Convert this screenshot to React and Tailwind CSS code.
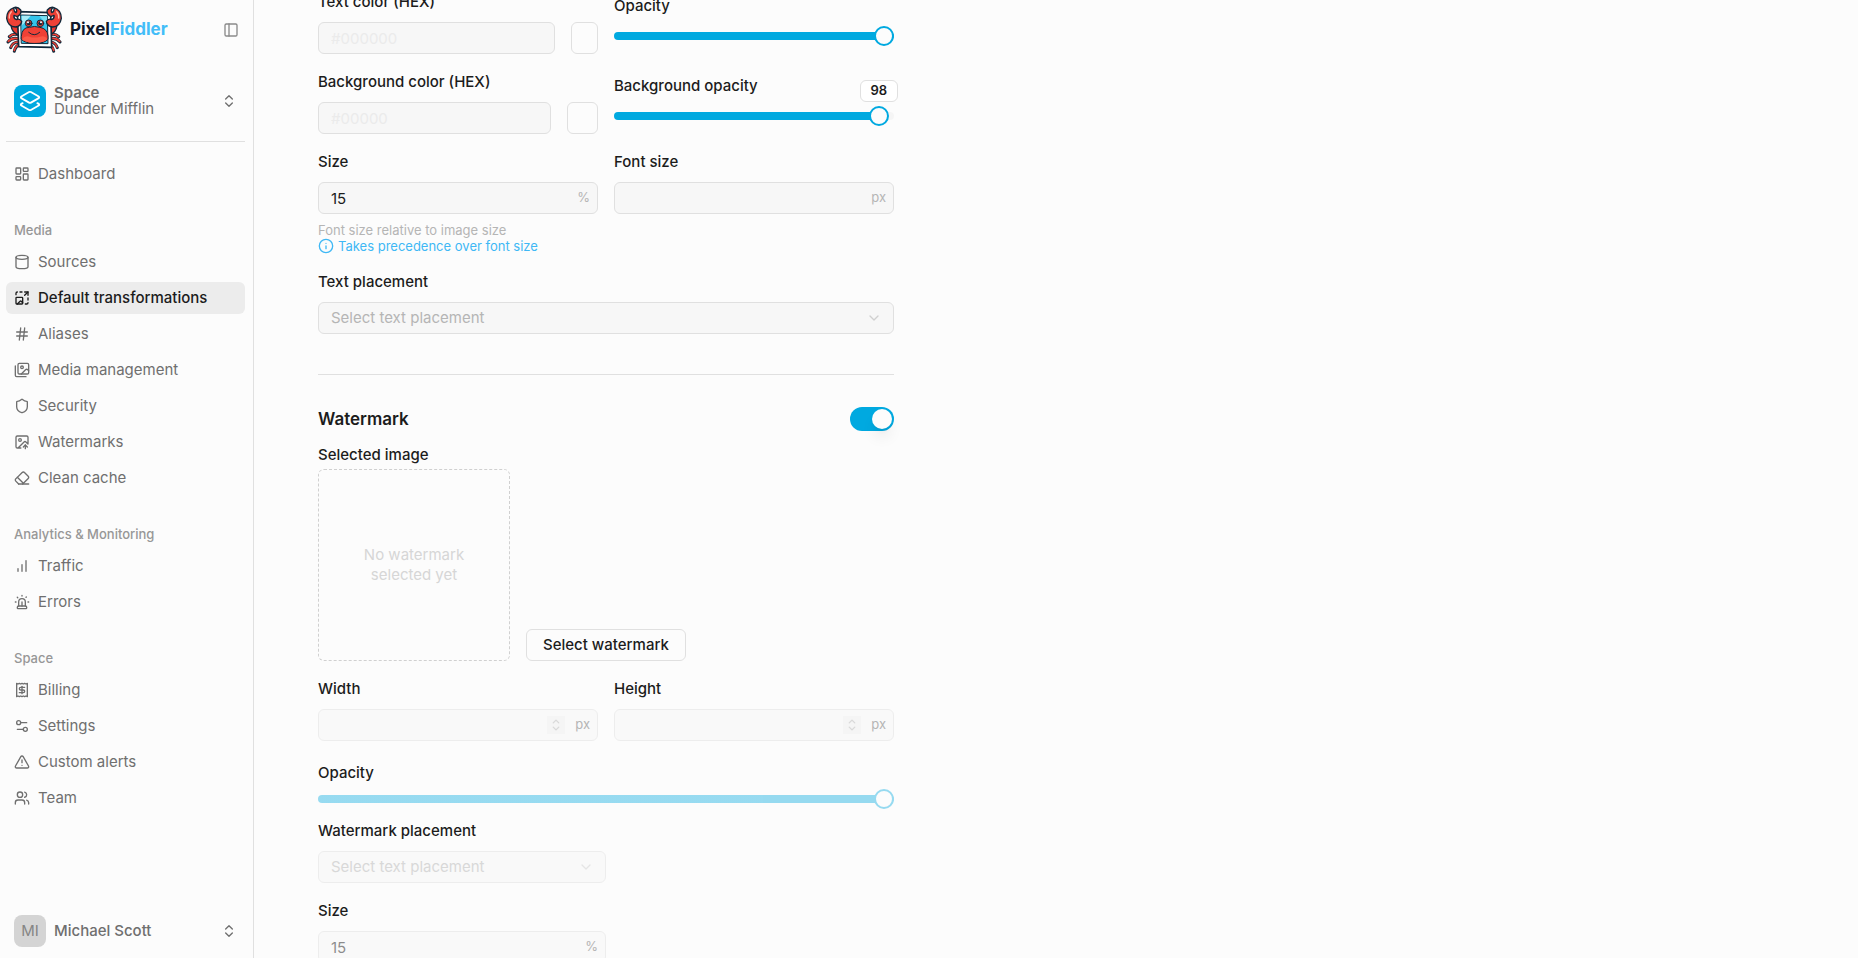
import { useState } from 'react';
import {
  ChevronDown,
  ChevronUp,
  ChevronsUpDown,
  Cylinder,
  Hash,
  ImageUp,
  ImageUpscale,
  Info,
  Layers2,
  LayoutDashboard,
  PanelLeft,
  Settings2,
  Shield,
  Siren,
  TriangleAlert,
  Users,
} from 'lucide-react';

function Glyph({ size = 16, children }) {
  return (
    <svg width={size} height={size} viewBox="0 0 24 24" fill="none" stroke="currentColor" strokeWidth="2" strokeLinecap="round" strokeLinejoin="round" className="shrink-0">
      {children}
    </svg>
  );
}

const ImagesIcon = ({ size }) => (
  <Glyph size={size}>
    <path d="M18 22H4a2 2 0 0 1-2-2V6" />
    <path d="m22 13-1.296-1.296a2.41 2.41 0 0 0-3.408 0L11 18" />
    <circle cx="12" cy="8" r="2" />
    <rect width="16" height="16" x="6" y="2" rx="2" />
  </Glyph>
);

const EraserIcon = ({ size }) => (
  <Glyph size={size}>
    <path d="m7 21-4.3-4.3c-1-1-1-2.5 0-3.4l9.6-9.6c1-1 2.5-1 3.4 0l5.6 5.6c1 1 1 2.5 0 3.4L13 21" />
    <path d="M22 21H7" />
    <path d="m5 11 9 9" />
  </Glyph>
);

const BarsIcon = ({ size }) => (
  <Glyph size={size}>
    <path d="M12 20V10" />
    <path d="M18 20V4" />
    <path d="M6 20v-4" />
  </Glyph>
);

const ReceiptIcon = ({ size }) => (
  <Glyph size={size}>
    <path d="M4 2v20l2-1 2 1 2-1 2 1 2-1 2 1 2-1 2 1V2l-2 1-2-1-2 1-2-1-2 1-2-1-2 1Z" />
    <path d="M16 8h-6a2 2 0 1 0 0 4h4a2 2 0 1 1 0 4H8" />
    <path d="M12 17.5v-11" />
  </Glyph>
);

const NAV = [
  { items: [{ label: 'Dashboard', icon: LayoutDashboard }] },
  {
    title: 'Media',
    items: [
      { label: 'Sources', icon: Cylinder },
      { label: 'Default transformations', icon: ImageUpscale, active: true },
      { label: 'Aliases', icon: Hash },
      { label: 'Media management', icon: ImagesIcon },
      { label: 'Security', icon: Shield },
      { label: 'Watermarks', icon: ImageUp },
      { label: 'Clean cache', icon: EraserIcon },
    ],
  },
  {
    title: 'Analytics & Monitoring',
    items: [
      { label: 'Traffic', icon: BarsIcon },
      { label: 'Errors', icon: Siren },
    ],
  },
  {
    title: 'Space',
    items: [
      { label: 'Billing', icon: ReceiptIcon },
      { label: 'Settings', icon: Settings2 },
      { label: 'Custom alerts', icon: TriangleAlert },
      { label: 'Team', icon: Users },
    ],
  },
];

function CrabLogo() {
  return (
    <svg viewBox="18 18 168 144" className="h-12 w-14 shrink-0" strokeLinejoin="round" strokeLinecap="round">
      {/* legs */}
      <g fill="none" stroke="#12283a" strokeWidth="9">
        <path d="M52 104Q38 100 28 110M54 116Q36 112 24 126M56 126Q38 126 32 143M60 132Q46 138 43 154" />
        <path d="M152 104Q166 100 176 110M152 116Q168 112 180 126M150 126Q166 126 172 143M146 132Q158 138 161 154" />
      </g>
      <g fill="none" stroke="#ef4136" strokeWidth="5">
        <path d="M52 104Q38 100 29 109M54 116Q36 112 25 124M56 126Q38 126 33 141M60 132Q46 138 43 151" />
        <path d="M152 104Q166 100 175 109M152 116Q168 112 179 124M150 126Q166 126 171 141M146 132Q158 138 161 151" />
      </g>
      {/* arms */}
      <path d="M33 76Q36 100 58 106L62 86Q50 84 48 76Z" fill="#e8382f" stroke="#12283a" strokeWidth="4" />
      <path d="M171 76Q168 100 146 106L142 86Q154 84 156 76Z" fill="#e8382f" stroke="#12283a" strokeWidth="4" />
      {/* frame */}
      <path d="M52 35L152 38L155 142L56 140Z" fill="#fff" stroke="#12283a" strokeWidth="5" />
      <path d="M63 45L142 47L144 131L65 130Z" fill="#35c4ea" stroke="#12283a" strokeWidth="3" />
      <path d="M65 47L92 47L67 76Z" fill="#a8ecf7" />
      <path d="M118 48L141 49L142 76Z" fill="#7adff2" />
      {/* body */}
      <path d="M64 108Q66 82 88 82Q103 77 120 82Q142 86 144 108L144 118Q134 130 104 130Q74 130 64 118Z" fill="#ef4136" stroke="#12283a" strokeWidth="3" />
      <path d="M66 118Q74 106 88 110Q104 115 120 110Q136 106 142 118Q132 129 104 128Q76 129 66 118Z" fill="#fb5a48" />
      <path d="M86 97Q103 112 119 97" fill="none" stroke="#12283a" strokeWidth="3" />
      {/* eyes */}
      <circle cx="86" cy="70" r="10" fill="#ef4136" stroke="#12283a" strokeWidth="3" />
      <circle cx="121" cy="70" r="10" fill="#ef4136" stroke="#12283a" strokeWidth="3" />
      <circle cx="86" cy="70" r="6" fill="#12283a" />
      <circle cx="121" cy="70" r="6" fill="#12283a" />
      <circle cx="84" cy="67" r="3" fill="#fff" />
      <circle cx="123" cy="67" r="3" fill="#fff" />
      {/* claws */}
      <path d="M42 23Q20 30 20 55Q24 80 46 81Q64 78 65 64Q58 54 50 59Q40 56 42 46L52 50Q66 42 62 30Q54 20 44 22Q54 30 48 38Q40 34 42 23Z" fill="#ef4136" stroke="#12283a" strokeWidth="4" />
      <path d="M162 23Q184 30 184 55Q180 80 158 81Q140 78 139 64Q146 54 154 59Q164 56 162 46L152 50Q138 42 142 30Q150 20 160 22Q150 30 156 38Q164 34 162 23Z" fill="#ef4136" stroke="#12283a" strokeWidth="4" />
      <path d="M28 54Q27 42 34 35" fill="none" stroke="#ffb3a3" strokeWidth="4" />
      <path d="M176 54Q177 42 170 35" fill="none" stroke="#ffb3a3" strokeWidth="4" />
    </svg>
  );
}

function NavGroup({ title, items }) {
  return (
    <div>
      {title && <h2 className="h-8 px-2 text-[13px] leading-8 font-medium text-[#979797]">{title}</h2>}
      <ul className="flex flex-col gap-1">
        {items.map(({ label, icon: Icon, active }) => (
          <li key={label}>
            <a
              href="#"
              className={`flex h-8 items-center gap-2 rounded-md px-2 ${
                active ? 'bg-[#ececec] font-medium text-[#1c1c1c]' : 'text-[#6f6f6f]'
              }`}
            >
              <Icon size={16} />
              {label}
            </a>
          </li>
        ))}
      </ul>
    </div>
  );
}

function Sidebar() {
  return (
    <aside className="flex w-[254px] shrink-0 flex-col border-r border-[#e0e0e0] pt-1.5 pr-2 pb-[3px] pl-1.5 text-[#6f6f6f]">
      <div className="flex items-center gap-2 pr-1.5">
        <CrabLogo />
        <span className="text-[17px] font-bold text-[#10182b]">
          Pixel<span className="text-[#42bdf8]">Fiddler</span>
        </span>
        <button type="button" aria-label="Toggle sidebar" className="ml-auto text-[#8a8a8a]">
          <PanelLeft size={16} />
        </button>
      </div>

      <button type="button" className="mt-[23px] flex h-12 items-center gap-2 px-2 text-left">
        <span className="flex size-8 items-center justify-center rounded-lg bg-[#00a9e0] text-white">
          <Layers2 size={22} strokeWidth={2} />
        </span>
        <span className="flex flex-1 flex-col leading-4">
          <span className="font-semibold">Space</span>
          <span>Dunder Mifflin</span>
        </span>
        <ChevronsUpDown size={16} />
      </button>

      <hr className="mt-4 border-[#e0e0e0]" />

      <nav className="mt-4 flex flex-col gap-6">
        {NAV.map((group, i) => (
          <NavGroup key={i} {...group} />
        ))}
      </nav>

      <button type="button" className="mt-auto flex h-12 items-center gap-2 px-2 text-left">
        <span className="flex size-8 items-center justify-center rounded-lg bg-[#d4d4d4] text-[#858585]">MI</span>
        <span className="flex-1 font-medium">Michael Scott</span>
        <ChevronsUpDown size={16} />
      </button>
    </aside>
  );
}

function Label({ htmlFor, children }) {
  return (
    <label htmlFor={htmlFor} className="block h-6 leading-6 font-medium text-[#1c1c1c]">
      {children}
    </label>
  );
}

function ColorField({ id, label, placeholder, swatch }) {
  return (
    <div className="flex flex-col gap-2">
      <Label htmlFor={id}>{label}</Label>
      <div className="flex gap-4">
        <input
          id={id}
          placeholder={placeholder}
          className="h-8 min-w-0 flex-1 rounded-md border border-[#e0e0e0] bg-[#f7f7f7] px-3 placeholder:text-[#ebebeb]"
        />
        <button type="button" aria-label={`Pick ${label}`} className={`h-8 shrink-0 rounded-md border border-[#e0e0e0] ${swatch}`} />
      </div>
    </div>
  );
}

function NumberField({ id, label, unit, defaultValue, disabled, stepper }) {
  return (
    <div className="flex flex-col gap-2">
      <Label htmlFor={id}>{label}</Label>
      <div className="relative">
        <input
          id={id}
          inputMode="numeric"
          defaultValue={defaultValue}
          disabled={disabled}
          className="h-8 w-full rounded-md border border-[#e0e0e0] bg-[#f7f7f7] pr-14 pl-3 text-[#1c1c1c] disabled:opacity-50"
        />
        <div className="pointer-events-none absolute inset-y-0 right-2 flex items-center gap-2.5 text-[13px] text-[#b5b5b5]">
          {stepper && (
            <span className="flex h-[18px] w-[18px] flex-col items-center justify-center bg-[#f5f5f5] text-[#d9d9d9]">
              <ChevronUp size={12} strokeWidth={3} className="-mb-1" />
              <ChevronDown size={12} strokeWidth={3} />
            </span>
          )}
          <span>{unit}</span>
        </div>
      </div>
    </div>
  );
}

function SelectField({ id, label, disabled }) {
  return (
    <div className="flex flex-col gap-2">
      <Label htmlFor={id}>{label}</Label>
      <div className={`relative ${disabled ? 'opacity-50' : ''}`}>
        <select
          id={id}
          disabled={disabled}
          className="h-8 w-full appearance-none rounded-md border border-[#e0e0e0] bg-[#f7f7f7] px-3 text-[#b5b5b5] opacity-100"
        >
          <option>Select text placement</option>
        </select>
        <ChevronDown size={16} className="pointer-events-none absolute top-2 right-3 text-[#d0d0d0]" />
      </div>
    </div>
  );
}

function Slider({ id, initial, disabled, showValue }) {
  const [value, setValue] = useState(initial);
  // the thumb is 20px wide, so its centre travels from 10px to 100% - 10px
  const center = `calc(10px + (100% - 20px) * ${value / 100})`;
  // a full track is painted to its rounded end
  const fill = value === 100 ? '100%' : center;

  return (
    <div className={`relative flex h-5 items-center ${disabled ? 'opacity-40' : ''}`}>
      <input
        id={id}
        type="range"
        min="0"
        max="100"
        value={value}
        disabled={disabled}
        onChange={(e) => setValue(Number(e.target.value))}
        style={{ backgroundImage: `linear-gradient(to right, #00a9e0 ${fill}, #f5f5f5 ${fill})` }}
        className="h-2 w-full appearance-none rounded-full [&::-webkit-slider-thumb]:size-5 [&::-webkit-slider-thumb]:appearance-none [&::-webkit-slider-thumb]:rounded-full [&::-webkit-slider-thumb]:border-2 [&::-webkit-slider-thumb]:border-solid [&::-webkit-slider-thumb]:border-[#00a9e0] [&::-webkit-slider-thumb]:bg-[#fcfcfc]"
      />
      {showValue && (
        <output
          htmlFor={id}
          style={{ left: center }}
          className="absolute bottom-full mb-1 flex h-[22px] w-[38px] -translate-x-1/2 items-center justify-center rounded-md border border-[#e0e0e0] bg-white text-[13px] font-semibold text-[#1c1c1c]"
        >
          {value}
        </output>
      )}
    </div>
  );
}

function Switch({ label }) {
  const [on, setOn] = useState(true);
  return (
    <button
      type="button"
      role="switch"
      aria-checked={on}
      aria-label={label}
      onClick={() => setOn(!on)}
      className={`flex h-6 w-11 items-center rounded-full p-0.5 ${on ? 'justify-end bg-[#00a9e0]' : 'justify-start bg-[#e0e0e0]'}`}
    >
      <span className="size-5 rounded-full bg-[#fcfcfc] shadow-lg" />
    </button>
  );
}

function TransformationForm() {
  return (
    <form className="-mt-2.5 max-w-xl">
      <div className="grid grid-cols-2 gap-4">
        <ColorField id="text-color" label="Text color (HEX)" placeholder="#000000" swatch="w-[27px]" />
        <div className="flex flex-col gap-2 pt-1">
          <Label htmlFor="text-opacity">Opacity</Label>
          <Slider id="text-opacity" initial={100} />
        </div>

        <ColorField id="bg-color" label="Background color (HEX)" placeholder="#00000" swatch="w-[31px]" />
        <div className="flex flex-col gap-2 pt-1">
          <Label htmlFor="bg-opacity">Background opacity</Label>
          <Slider id="bg-opacity" initial={98} showValue />
        </div>

        <div>
          <NumberField id="text-size" label="Size" unit="%" defaultValue="15" />
          <p className="mt-2 text-[13px] leading-4 text-[#b5b5b5]">Font size relative to image size</p>
          <p className="flex items-center gap-1 text-[13px] leading-4 text-[#3fb8f5]">
            <Info size={16} />
            Takes precedence over font size
          </p>
        </div>
        <NumberField id="font-size" label="Font size" unit="px" />

        <div className="col-span-2">
          <SelectField id="text-placement" label="Text placement" />
        </div>
      </div>

      <hr className="mt-10 mb-8 border-[#e0e0e0]" />

      <div className="flex items-center justify-between">
        <h3 className="text-[17px] leading-6 font-semibold text-[#1c1c1c]">Watermark</h3>
        <Switch label="Watermark" />
      </div>

      <p className="mt-3 leading-6 font-medium text-[#1c1c1c]">Selected image</p>
      <div className="mt-0.5 flex items-end gap-4">
        <div className="flex size-48 items-center justify-center rounded-md border border-dashed border-[#d0d0d0] px-8 text-center leading-5 text-[#d6d6d6]">
          No watermark selected yet
        </div>
        <button type="button" className="h-8 rounded-md border border-[#e0e0e0] px-4 font-medium text-[#1c1c1c]">
          Select watermark
        </button>
      </div>

      <div className="mt-4 grid grid-cols-2 gap-4">
        <NumberField id="wm-width" label="Width" unit="px" disabled stepper />
        <NumberField id="wm-height" label="Height" unit="px" disabled stepper />
      </div>

      <div className="mt-5 flex flex-col gap-1">
        <Label htmlFor="wm-opacity">Opacity</Label>
        <Slider id="wm-opacity" initial={100} disabled />
      </div>

      <div className="mt-2.5 flex w-1/2 flex-col gap-4">
        <SelectField id="wm-placement" label="Watermark placement" disabled />
        <NumberField id="wm-size" label="Size" unit="%" defaultValue="15" disabled />
      </div>
    </form>
  );
}

export default function App() {
  return (
    <div className="flex h-screen overflow-hidden bg-[#fcfcfc] font-['Inter','Noto_Sans',sans-serif] text-[15px]">
      <Sidebar />
      <main className="min-w-0 flex-1 overflow-hidden px-16">
        <TransformationForm />
      </main>
    </div>
  );
}
